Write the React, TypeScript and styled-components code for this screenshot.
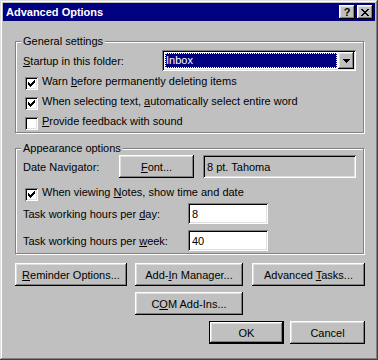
import styled, { createGlobalStyle } from "styled-components";

const GlobalStyle = createGlobalStyle`
  * { box-sizing: border-box; }
  html, body { margin: 0; padding: 0; background: #c0c0c0; }
  body {
    font-family: Tahoma, "Liberation Sans", Arial, sans-serif;
    font-size: 11px;
    color: #000;
  }
`;

const raised = `
  background: #c0c0c0;
  box-shadow: inset -1px -1px #000, inset 1px 1px #fff, inset -2px -2px #808080, inset 2px 2px #dfdfdf;
`;

const sunken = `
  box-shadow: inset 1px 1px #808080, inset -1px -1px #fff, inset 2px 2px #000, inset -2px -2px #dfdfdf;
`;

const Window = styled.div`
  width: 378px;
  height: 360px;
  overflow: hidden;
  padding: 3px;
  background: #c0c0c0;
  box-shadow: inset -1px -1px #404040, inset 1px 1px #dfdfdf, inset -2px -2px #808080, inset 2px 2px #fff;
  display: flex;
  flex-direction: column;
`;

const TitleBar = styled.div`
  flex: none;
  height: 18px;
  display: flex;
  align-items: center;
  padding: 0 2px 0 3px;
  background: #000080;
  color: #fff;
  font-weight: bold;
`;

const TitleText = styled.span`
  flex: 1;
  white-space: nowrap;
`;

const CaptionButton = styled.button`
  ${raised}
  width: 16px;
  height: 14px;
  border: 0;
  padding: 0;
  margin-left: 2px;
  display: flex;
  align-items: center;
  justify-content: center;
  font: bold 11px Tahoma, "Liberation Sans", Arial, sans-serif;
  color: #000;
  line-height: 1;
`;

const Body = styled.div`
  display: flex;
  flex-direction: column;
  padding: 20px 11px 0 12px;
`;

const Group = styled.div<{ $mt?: number; $pb: number }>`
  margin-top: ${(p) => p.$mt ?? 0}px;
  border: 1px solid #808080;
  box-shadow: inset 1px 1px #fff, 1px 1px #fff;
  padding: 0 7px ${(p) => p.$pb}px;
  display: flex;
  flex-direction: column;
`;

const Legend = styled.div`
  align-self: flex-start;
  height: 13px;
  line-height: 13px;
  margin: -7px 0 0 -2px;
  padding: 0 2px;
  background: #c0c0c0;
  white-space: nowrap;
`;

const Row = styled.div<{ $mt?: number; $h: number }>`
  display: flex;
  align-items: center;
  height: ${(p) => p.$h}px;
  margin-top: ${(p) => p.$mt ?? 0}px;
`;

const Label = styled.span<{ $w: number }>`
  flex: none;
  width: ${(p) => p.$w}px;
  white-space: nowrap;
`;

const U = styled.span`
  text-decoration: underline;
`;

const Combo = styled.div`
  flex: 1;
  align-self: stretch;
  display: flex;
  padding: 2px;
  background: #fff;
  ${sunken}
`;

const ComboValue = styled.div`
  flex: 1;
  margin: 1px;
  border: 1px dotted #fff;
  background: #000080;
  color: #fff;
  display: flex;
  align-items: center;
  line-height: 13px;
`;

const ComboButton = styled.div`
  ${raised}
  flex: none;
  width: 16px;
  display: flex;
  align-items: center;
  justify-content: center;
`;

const CheckRow = styled.div<{ $mt: number }>`
  display: flex;
  align-items: flex-start;
  height: 18px;
  margin-top: ${(p) => p.$mt}px;
  padding-left: 2px;
`;

const Box = styled.span`
  flex: none;
  width: 13px;
  height: 13px;
  margin-top: 3px;
  background: #fff;
  ${sunken}
  display: flex;
  align-items: center;
  justify-content: center;
`;

const CheckText = styled.span`
  margin: 1px 0 0 4px;
  line-height: 13px;
  white-space: nowrap;
`;

const Field = styled.div<{ $w?: number; $ml?: number; $bg: string }>`
  ${(p) => (p.$w ? `width: ${p.$w}px; flex: none;` : "flex: 1;")}
  margin-left: ${(p) => p.$ml ?? 0}px;
  align-self: stretch;
  display: flex;
  align-items: center;
  padding: 0 4px;
  background: ${(p) => p.$bg};
  ${sunken}
  white-space: nowrap;
`;

const Button = styled.button<{ $w: number; $ml?: string; $default?: boolean }>`
  ${raised}
  flex: none;
  width: ${(p) => p.$w}px;
  height: 23px;
  margin-left: ${(p) => p.$ml ?? "0"};
  border: 0;
  padding: 0;
  font: 11px Tahoma, "Liberation Sans", Arial, sans-serif;
  color: #000;
  white-space: nowrap;
  ${(p) =>
    p.$default &&
    `box-shadow: inset 0 0 0 1px #000, inset -2px -2px #000, inset 2px 2px #fff, inset -3px -3px #808080, inset 3px 3px #dfdfdf;`}
`;

const ButtonRow = styled.div<{ $mt: number; $end?: boolean }>`
  display: flex;
  justify-content: ${(p) => (p.$end ? "flex-end" : "flex-start")};
  gap: ${(p) => (p.$end ? 6 : 0)}px;
  margin: ${(p) => p.$mt}px -1px 0 0;
`;

// one [top, height] pair per pixel column of the classic 7x7 tick
const checkCols = [
  [2, 3],
  [3, 3],
  [4, 3],
  [3, 3],
  [2, 3],
  [1, 3],
  [0, 3],
];

const CheckMark = () => (
  <svg width="7" height="7" viewBox="0 0 7 7" shapeRendering="crispEdges">
    {checkCols.map(([top, h], x) => (
      <rect key={x} x={x} y={top} width="1" height={h} fill="#000" />
    ))}
  </svg>
);

const CheckBox = ({ checked, mt, children }: { checked: boolean; mt: number; children: React.ReactNode }) => (
  <CheckRow $mt={mt}>
    <Box>{checked && <CheckMark />}</Box>
    <CheckText>{children}</CheckText>
  </CheckRow>
);

const CloseGlyph = () => (
  <svg width="8" height="7" viewBox="0 0 8 7" shapeRendering="crispEdges">
    <path d="M0 0h2v1h-2zM6 0h2v1h-2zM1 1h2v1h-2zM5 1h2v1h-2zM2 2h4v1h-4zM3 3h2v1h-2zM2 4h4v1h-4zM1 5h2v1h-2zM5 5h2v1h-2zM0 6h2v1h-2zM6 6h2v1h-2z" fill="#000" />
  </svg>
);

const DownArrow = () => (
  <svg width="7" height="4" viewBox="0 0 7 4" shapeRendering="crispEdges">
    <path d="M0 0h7v1h-7zM1 1h5v1h-5zM2 2h3v1h-3zM3 3h1v1h-1z" fill="#000" />
  </svg>
);

export default function App() {
  return (
    <>
      <GlobalStyle />
      <Window>
        <TitleBar>
          <TitleText>Advanced Options</TitleText>
          <CaptionButton>?</CaptionButton>
          <CaptionButton>
            <CloseGlyph />
          </CaptionButton>
        </TitleBar>
        <Body>
          <Group $pb={0}>
            <Legend>General settings</Legend>
            <Row $mt={2} $h={21}>
              <Label $w={139}>
                <U>S</U>tartup in this folder:
              </Label>
              <Combo>
                <ComboValue>Inbox</ComboValue>
                <ComboButton>
                  <DownArrow />
                </ComboButton>
              </Combo>
            </Row>
            <CheckBox checked mt={3}>
              Warn <U>b</U>efore permanently deleting items
            </CheckBox>
            <CheckBox checked mt={2}>
              When selecting text, <U>a</U>utomatically select entire word
            </CheckBox>
            <CheckBox checked={false} mt={2}>
              <U>P</U>rovide feedback with sound
            </CheckBox>
          </Group>

          <Group $mt={15} $pb={2}>
            <Legend>Appearance options</Legend>
            <Row $h={23}>
              <Label $w={96}>Date Navigator:</Label>
              <Button $w={75}>
                <U>F</U>ont...
              </Button>
              <Field $bg="#c0c0c0" $ml={9}>
                8 pt. Tahoma
              </Field>
            </Row>
            <CheckBox checked mt={7}>
              When viewing <U>N</U>otes, show time and date
            </CheckBox>
            <Row $h={21}>
              <Label $w={165}>
                Task working hours per <U>d</U>ay:
              </Label>
              <Field $w={80} $bg="#fff">
                8
              </Field>
            </Row>
            <Row $mt={6} $h={21}>
              <Label $w={165}>
                Task working hours per <U>w</U>eek:
              </Label>
              <Field $w={80} $bg="#fff">
                40
              </Field>
            </Row>
          </Group>

          <ButtonRow $mt={9}>
            <Button $w={112}>
              <U>R</U>eminder Options...
            </Button>
            <Button $w={108} $ml="8px">
              Add-<U>I</U>n Manager...
            </Button>
            <Button $w={113} $ml="auto">
              Advanced <U>T</U>asks...
            </Button>
          </ButtonRow>
          <ButtonRow $mt={6}>
            <Button $w={108} $ml="120px">
              C<U>O</U>M Add-Ins...
            </Button>
          </ButtonRow>
          <ButtonRow $mt={6} $end>
            <Button $w={75} $default>
              OK
            </Button>
            <Button $w={75}>Cancel</Button>
          </ButtonRow>
        </Body>
      </Window>
    </>
  );
}
